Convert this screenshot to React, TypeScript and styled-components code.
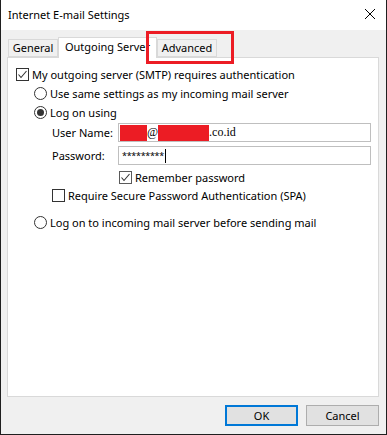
import React from "react";
import styled, { createGlobalStyle } from "styled-components";

const GlobalStyle = createGlobalStyle`
  html, body {
    margin: 0;
    padding: 0;
    background: #ffffff;
  }
  body {
    font-family: "Noto Sans", "Segoe UI", sans-serif;
    font-size: 11px;
    color: #000000;
  }
`;

const Window = styled.div`
  width: 387px;
  height: 435px;
  box-sizing: border-box;
  border: 1px solid #1f1f1f;
  border-top: none;
  display: flex;
  flex-direction: column;
  background: #f0f0f0;
  position: relative;
`;

const TitleBar = styled.div`
  height: 30px;
  flex: none;
  background: #ffffff;
  display: flex;
  align-items: center;
  justify-content: space-between;
  padding: 0 10px 2px 7px;
  box-sizing: border-box;
`;

const Title = styled.span`
  font-size: 11px;
`;

const Body = styled.div`
  flex: 1;
  display: flex;
  flex-direction: column;
  padding: 7px 7px 8px 6px;
  min-height: 0;
`;

const TabStrip = styled.div`
  height: 20px;
  display: flex;
  align-items: flex-end;
  padding-left: 1px;
`;

const Tab = styled.div<{ $active?: boolean; $w: number }>`
  position: relative;
  z-index: ${(p) => (p.$active ? 2 : 1)};
  box-sizing: border-box;
  width: ${(p) => p.$w}px;
  height: ${(p) => (p.$active ? 21 : 18)}px;
  margin-bottom: ${(p) => (p.$active ? -1 : 0)}px;
  background: ${(p) => (p.$active ? "#ffffff" : "#f0f0f0")};
  border: 1px solid #d9d9d9;
  border-bottom: ${(p) => (p.$active ? "none" : "1px solid #d9d9d9")};
  display: flex;
  align-items: ${(p) => (p.$active ? "flex-start" : "center")};
  justify-content: center;
  padding-top: ${(p) => (p.$active ? 1 : 0)}px;
  font-size: 11px;
  line-height: 16px;
  white-space: nowrap;
`;

const Highlight = styled.div`
  position: absolute;
  left: 145px;
  top: 31px;
  width: 88px;
  height: 33px;
  box-sizing: border-box;
  border: 3px solid #ec1c24;
  pointer-events: none;
  z-index: 5;
`;

const Panel = styled.div`
  flex: 1;
  background: #ffffff;
  border: 1px solid #d9d9d9;
  padding: 7px 7px 0 0;
  display: flex;
  flex-direction: column;
`;

const Row = styled.div<{ $indent: number; $top?: number; $h?: number }>`
  display: flex;
  align-items: center;
  height: ${(p) => p.$h ?? 19}px;
  margin-left: ${(p) => p.$indent}px;
  margin-top: ${(p) => p.$top ?? 0}px;
  white-space: nowrap;
`;

const Box = styled.span<{ $soft?: boolean }>`
  width: 13px;
  height: 13px;
  box-sizing: border-box;
  border: 1px solid ${(p) => (p.$soft ? "#5a5a5a" : "#333333")};
  background: #ffffff;
  display: inline-flex;
  align-items: center;
  justify-content: center;
  margin-right: 3px;
  flex: none;
`;

const Radio = styled.span<{ $on?: boolean }>`
  width: 13px;
  height: 13px;
  box-sizing: border-box;
  border: 1px solid #333333;
  border-radius: 50%;
  background: #ffffff;
  display: inline-flex;
  align-items: center;
  justify-content: center;
  margin-right: 3px;
  flex: none;
  &::after {
    content: "";
    display: ${(p) => (p.$on ? "block" : "none")};
    width: 7px;
    height: 7px;
    border-radius: 50%;
    background: #333333;
  }
`;

const FieldLabel = styled.span`
  width: 66px;
  flex: none;
`;

const Field = styled.div`
  flex: 1;
  height: 19px;
  box-sizing: border-box;
  border: 1px solid #bfbfbf;
  display: flex;
  align-items: center;
  padding-left: 1px;
  font-family: "Liberation Serif", "Times New Roman", serif;
  font-size: 12px;
`;

const Redact = styled.span<{ $w: number }>`
  display: inline-block;
  width: ${(p) => p.$w}px;
  height: 16px;
  background: #ec1c24;
`;

const Stars = styled.span`
  font-family: "Noto Sans", sans-serif;
  font-size: 9px;
  letter-spacing: -0.3px;
  padding-left: 2px;
`;

const Caret = styled.span`
  display: inline-block;
  width: 1px;
  height: 14px;
  background: #000000;
  margin-left: 1px;
`;

const ButtonRow = styled.div`
  display: flex;
  justify-content: flex-end;
  gap: 8px;
  margin-top: 8px;
`;

const Button = styled.button<{ $default?: boolean }>`
  width: 73px;
  height: 21px;
  box-sizing: border-box;
  background: #e1e1e1;
  border: ${(p) => (p.$default ? "2px solid #0078d7" : "1px solid #adadad")};
  font-family: "Noto Sans", "Segoe UI", sans-serif;
  font-size: 11px;
  color: #000000;
  padding: 0;
  line-height: 16px;
`;

const Check = () => (
  <svg width="11" height="11" viewBox="0 0 11 11">
    <path d="M1.5 5.5 L4 8.5 L9.5 2" fill="none" stroke="#333" strokeWidth="1.1" />
  </svg>
);

const CloseIcon = () => (
  <svg width="12" height="12" viewBox="0 0 12 12">
    <path d="M1 1 L11 11 M11 1 L1 11" stroke="#000" strokeWidth="1" />
  </svg>
);

const App = () => {
  return (
    <>
      <GlobalStyle />
      <Window>
        <TitleBar>
          <Title>Internet E-mail Settings</Title>
          <CloseIcon />
        </TitleBar>
        <Body>
          <TabStrip>
            <Tab $w={50}>General</Tab>
            <Tab $active $w={99}>Outgoing Server</Tab>
            <Tab $w={60}>Advanced</Tab>
          </TabStrip>
          <Panel>
            <Row $indent={8}>
              <Box>
                <Check />
              </Box>
              My outgoing server (SMTP) requires authentication
            </Row>
            <Row $indent={26}>
              <Radio />
              Use same settings as my incoming mail server
            </Row>
            <Row $indent={26}>
              <Radio $on />
              Log on using
            </Row>
            <Row $indent={44} $top={1}>
              <FieldLabel>User Name:</FieldLabel>
              <Field>
                <Redact $w={27} />
                @
                <Redact $w={51} />
                .co.id
              </Field>
            </Row>
            <Row $indent={44} $top={4}>
              <FieldLabel>Password:</FieldLabel>
              <Field>
                <Stars>*********</Stars>
                <Caret />
              </Field>
            </Row>
            <Row $indent={111} $top={3} $h={18}>
              <Box $soft>
                <Check />
              </Box>
              Remember password
            </Row>
            <Row $indent={44}>
              <Box />
              Require Secure Password Authentication (SPA)
            </Row>
            <Row $indent={26} $top={8}>
              <Radio />
              Log on to incoming mail server before sending mail
            </Row>
          </Panel>
          <ButtonRow>
            <Button $default>OK</Button>
            <Button>Cancel</Button>
          </ButtonRow>
        </Body>
        <Highlight />
      </Window>
    </>
  );
};

export default App;
